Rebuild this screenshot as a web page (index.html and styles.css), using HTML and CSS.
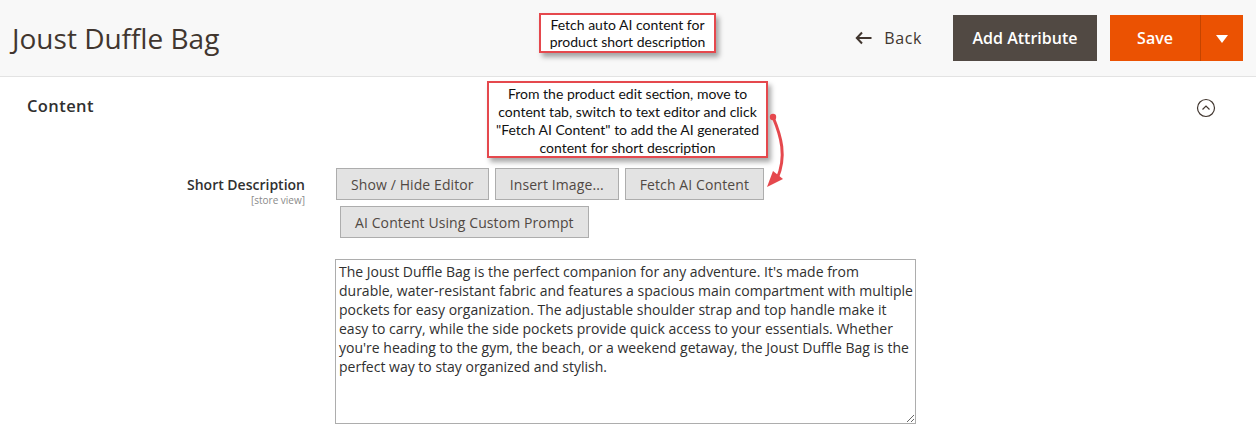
FILE: index.html
```html
<!DOCTYPE html>
<html>
<head>
<meta charset="utf-8">
<link rel="stylesheet" href="styles.css">
</head>
<body>
<div class="page">
  <header class="page-header">
    <h1 class="page-title">Joust Duffle Bag</h1>
    <div class="actions">
      <a class="back"><svg class="back-icon" width="18" height="14" viewBox="0 0 18 14"><path d="M7 1.5 L1.8 7 L7 12.5 M2 7 H16.5" fill="none" stroke="#41362f" stroke-width="2"/></svg><span>Back</span></a>
      <button class="btn-secondary">Add Attribute</button>
      <div class="save-split">
        <button class="btn-save">Save</button>
        <button class="btn-toggle"><span class="caret"></span></button>
      </div>
    </div>
    <div class="callout callout-top">Fetch auto AI content for<br>product short description</div>
  </header>

  <section class="section">
    <div class="section-head">
      <h2 class="section-title">Content</h2>
      <svg class="collapse" width="20" height="20" viewBox="0 0 20 20"><circle cx="10" cy="10" r="8.5" fill="none" stroke="#41362f" stroke-width="1.2"/><path d="M6.5 11.5 L10 8 L13.5 11.5" fill="none" stroke="#41362f" stroke-width="1.2"/></svg>
    </div>
    <div class="callout callout-mid">From the product edit section, move to<br>content tab, switch to text editor and click<br>"Fetch AI Content" to add the AI generated<br>content for short description</div>
    <svg class="pointer" width="40" height="90" viewBox="0 0 40 90"><circle cx="8" cy="6" r="3.2" fill="#e5484d"/><path d="M8 6 C 16 25, 22 45, 12 68" fill="none" stroke="#e5484d" stroke-width="3"/><path d="M2 76 L8 60 L18 68 Z" fill="#e5484d"/></svg>

    <div class="field">
      <div class="field-label">
        <span class="label-text">Short Description</span>
        <span class="scope">[store view]</span>
      </div>
      <div class="field-control">
        <div class="toolbar">
          <button class="btn-editor">Show / Hide Editor</button>
          <button class="btn-editor">Insert Image...</button>
          <button class="btn-editor">Fetch AI Content</button>
          <button class="btn-editor second-row">AI Content Using Custom Prompt</button>
        </div>
        <textarea class="editor">The Joust Duffle Bag is the perfect companion for any adventure. It's made from
durable, water-resistant fabric and features a spacious main compartment with multiple
pockets for easy organization. The adjustable shoulder strap and top handle make it
easy to carry, while the side pockets provide quick access to your essentials. Whether
you're heading to the gym, the beach, or a weekend getaway, the Joust Duffle Bag is the
perfect way to stay organized and stylish.</textarea>
      </div>
    </div>
  </section>
</div>
</body>
</html>
```
FILE: styles.css
```css
* { box-sizing: border-box; }
html, body { margin: 0; padding: 0; background: #fff; }
body { font-family: "Open Sans", "Noto Sans", sans-serif; color: #303030; width: 1256px; height: 438px; overflow: hidden; }

.page-header {
  position: relative;
  height: 77px;
  background: #f8f8f8;
  border-bottom: 1px solid #e3e3e3;
  display: flex;
  align-items: center;
  justify-content: space-between;
  padding: 0 13px 0 12px;
}
.page-title {
  margin: 0;
  font-size: 28px;
  font-weight: 400;
  color: #41362f;
  padding-bottom: 1px;
}
.actions { display: flex; align-items: center; }
.back {
  display: flex; align-items: center;
  font-size: 16px; color: #41362f;
  margin-right: 31px;
  letter-spacing: 0.6px;
}
.back-icon { margin-right: 11px; }
button { font-family: "Open Sans", "Noto Sans", sans-serif; cursor: pointer; }
.btn-secondary {
  height: 46px; width: 144px;
  background: #514943; color: #fff;
  border: none; font-size: 16px; font-weight: 600;
  margin-right: 13px;
  padding: 0;
}
.save-split { display: flex; height: 46px; }
.btn-save {
  width: 91px; height: 46px; background: #eb5202; color: #fff;
  border: none; border-right: 1px solid #c44400;
  font-size: 16px; font-weight: 600; padding: 0;
}
.btn-toggle {
  width: 42px; height: 46px; background: #eb5202; border: none; padding: 0;
  display: flex; align-items: center; justify-content: center;
}
.caret {
  width: 0; height: 0;
  border-left: 6px solid transparent; border-right: 6px solid transparent;
  border-top: 8px solid #fff;
  margin-top: 2px;
}

.callout {
  position: absolute;
  background: #fff;
  border: 2px solid #e5484d;
  box-shadow: 3px 4px 5px rgba(0,0,0,0.35);
  font-family: Lato, "Open Sans", sans-serif;
  font-size: 14px;
  color: #111;
  text-align: center;
}
.callout-top { left: 539px; top: 13px; width: 177px; height: 40px; line-height: 17px; padding-top: 1px; }

.section { position: relative; }
.section-head {
  display: flex; align-items: center; justify-content: space-between;
  padding: 0 40px 0 27px;
  height: 60px;
}
.section-title { margin: 0; font-size: 16.5px; font-weight: 600; color: #303030; letter-spacing: 0.4px; margin-top: -3px; }
.collapse { margin-top: 2px; }
.callout-mid { left: 487px; top: 4px; width: 281px; height: 77px; line-height: 18px; padding-top: 2px; }
.pointer { position: absolute; left: 765px; top: 34px; }

.field { display: flex; padding-top: 31px; }
.field-label {
  width: 305px; text-align: right;
  display: flex; flex-direction: column; align-items: flex-end;
  padding-top: 8px;
}
.label-text { font-size: 14px; font-weight: 600; color: #303030; line-height: 18px; }
.scope { font-size: 10px; color: #8a8a8a; line-height: 12px; }
.field-control { margin-left: 30px; width: 581px; }
.toolbar { display: flex; flex-wrap: wrap; column-gap: 6px; row-gap: 6px; padding-left: 1px; }
.btn-editor {
  height: 32px; background: #e3e3e3; border: 1px solid #adadad;
  color: #514943; font-size: 14px; padding: 0 14px;
  letter-spacing: 0.1px;
}
.second-row { margin-left: 4px; }
.editor {
  display: block;
  margin-top: 21px;
  width: 581px; height: 165px;
  border: 1px solid #adadad;
  font-family: "Open Sans", "Noto Sans", sans-serif;
  font-size: 14px; line-height: 19px; color: #303030;
  padding: 2px 0 2px 3px;
  white-space: pre;
  overflow: hidden;
  resize: both;
}
```
